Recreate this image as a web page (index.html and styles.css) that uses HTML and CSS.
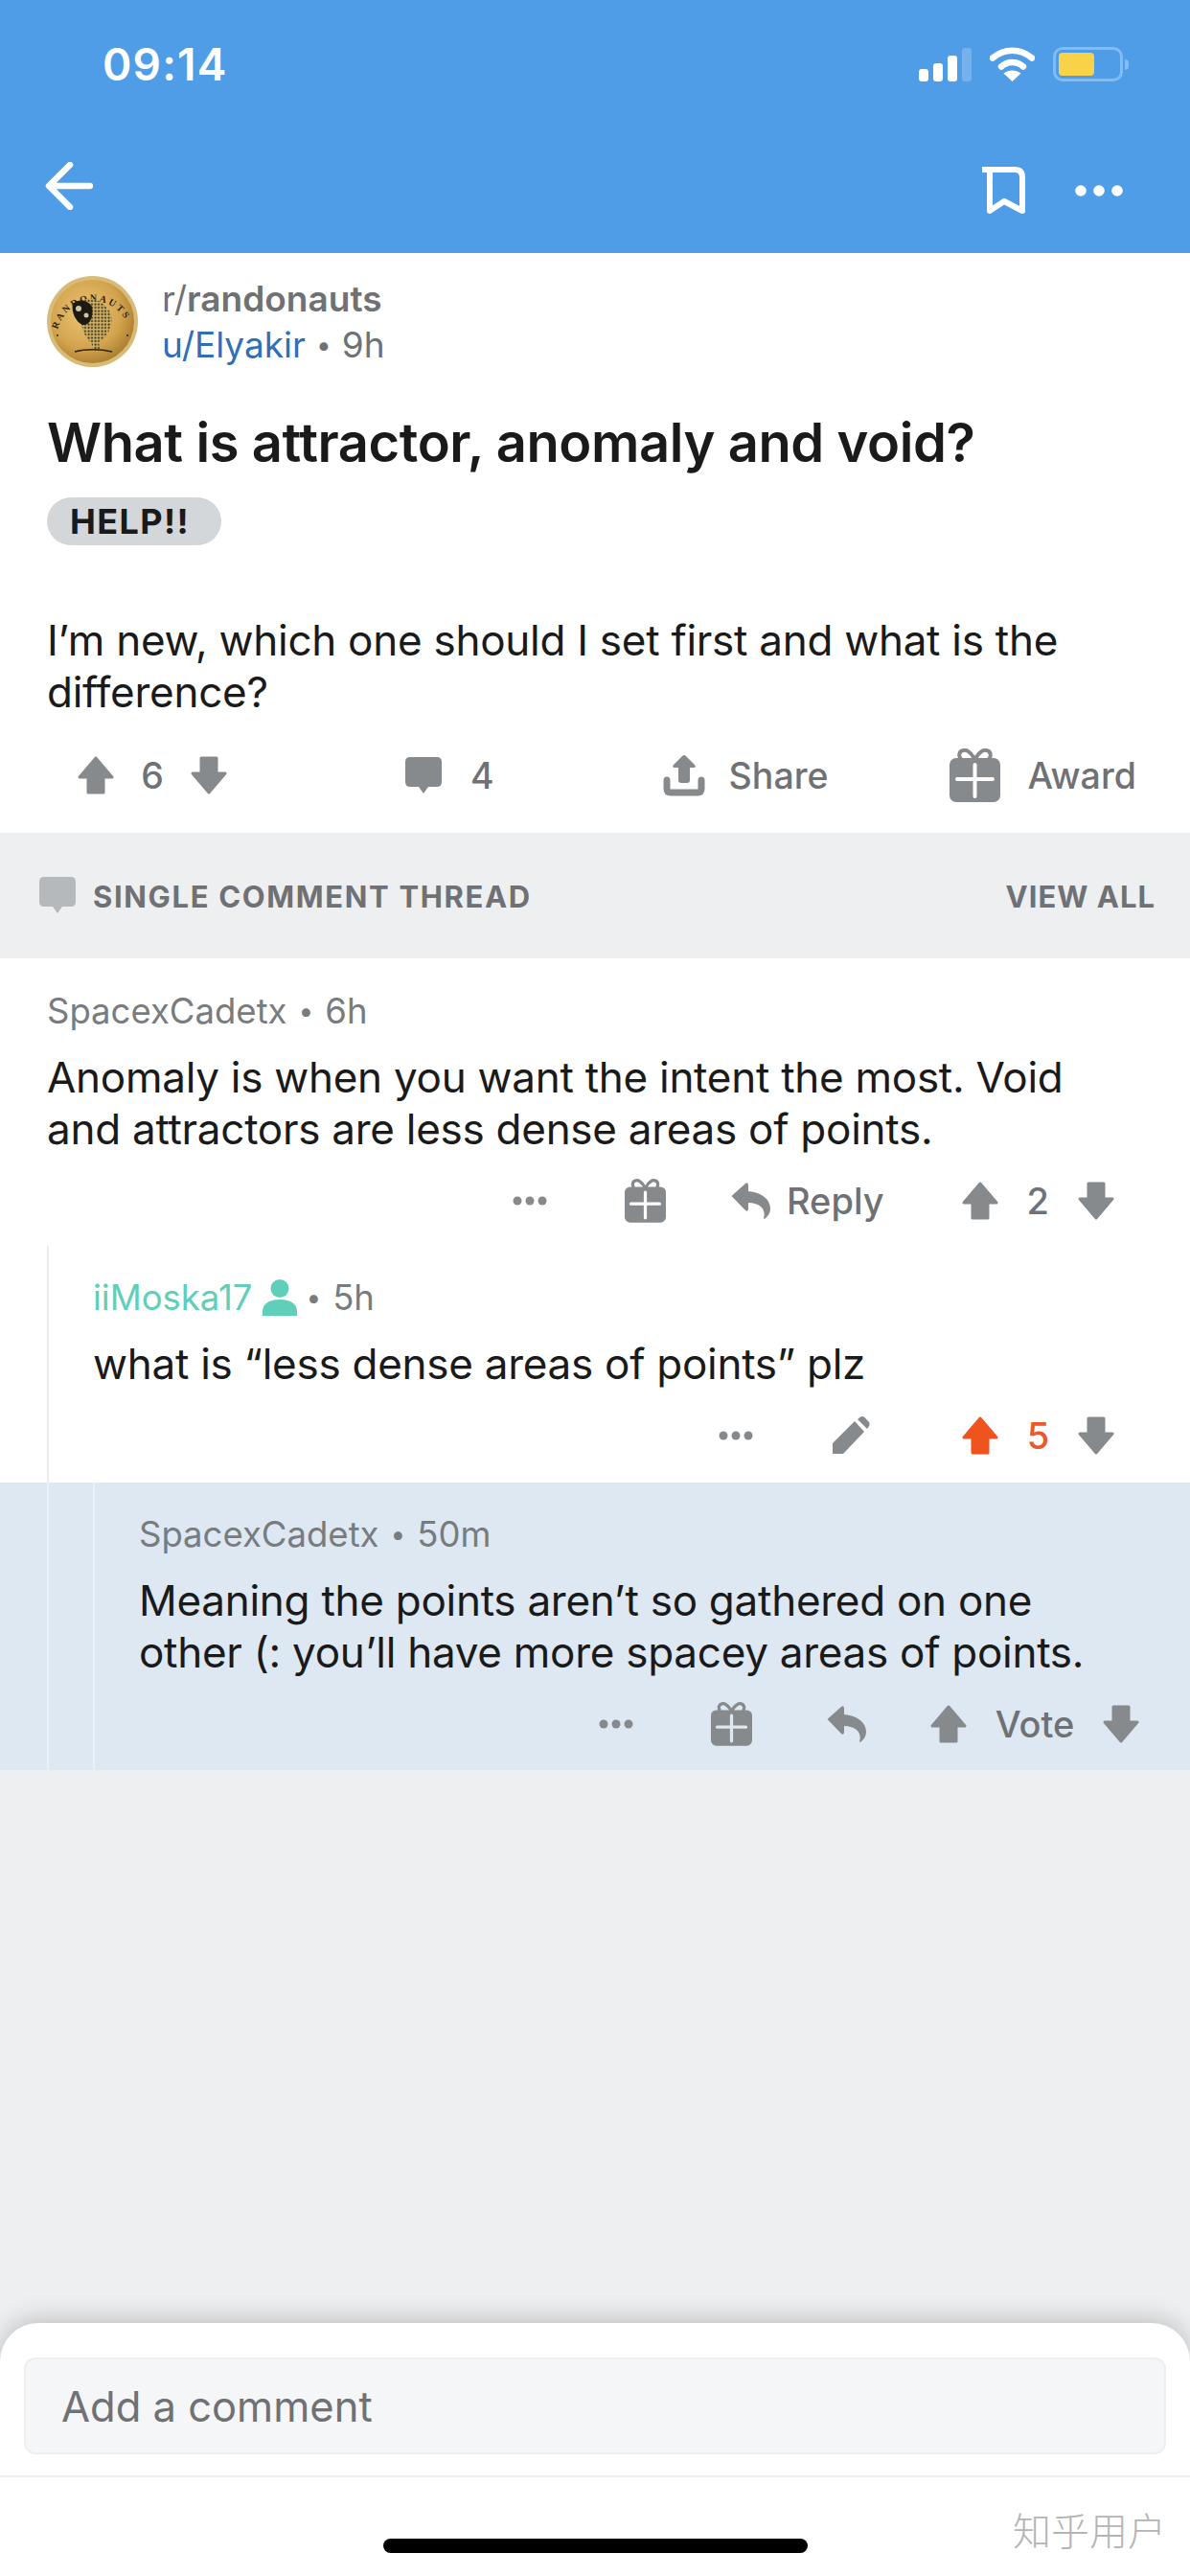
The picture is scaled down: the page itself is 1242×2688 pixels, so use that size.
FILE: index.html
```html
<!DOCTYPE html>
<html lang="en">
<head>
<meta charset="utf-8">
<title>What is attractor, anomaly and void?</title>
<link rel="stylesheet" href="styles.css">
</head>
<body>
<svg class="sprites" width="0" height="0" aria-hidden="true">
  <symbol id="i-up" viewBox="0 0 38 40"><path d="M19 2 L36 22 H27 V38 H11 V22 H2 Z" fill="currentColor" stroke="currentColor" stroke-width="3" stroke-linejoin="round"/></symbol>
  <symbol id="i-down" viewBox="0 0 38 40"><path d="M19 38 L36 18 H27 V2 H11 V18 H2 Z" fill="currentColor" stroke="currentColor" stroke-width="3" stroke-linejoin="round"/></symbol>
  <symbol id="i-bubble" viewBox="0 0 38 38"><path d="M5 0 H33 Q38 0 38 5 V26 Q38 31 33 31 H24 L19 38 L14 31 H5 Q0 31 0 26 V5 Q0 0 5 0 Z" fill="currentColor"/></symbol>
  <symbol id="i-share" viewBox="0 0 44 44"><path d="M22 1 Q23 1 24 2 L33 11 Q35 14 32 14 H28 V27 Q28 30 25 30 H19 Q16 30 16 27 V14 H12 Q9 14 11 11 L20 2 Q21 1 22 1 Z" fill="currentColor"/><path d="M4 27 V36 Q4 40 8 40 H36 Q40 40 40 36 V27" fill="none" stroke="currentColor" stroke-width="7" stroke-linecap="round"/></symbol>
  <symbol id="i-gift" viewBox="0 0 53 56"><path d="M26 11 C22 3 17 1 14 2 C10 3 9 8 12 11 M27 11 C31 3 36 1 39 2 C43 3 44 8 41 11" fill="none" stroke="currentColor" stroke-width="4"/><rect x="0" y="10" width="53" height="46" rx="7" fill="currentColor"/><path d="M8 32 H45 M26.500 17 V50" stroke="#fff" stroke-width="4" stroke-linecap="round"/></symbol>
  <symbol id="i-gift-blue" viewBox="0 0 53 56"><path d="M26 11 C22 3 17 1 14 2 C10 3 9 8 12 11 M27 11 C31 3 36 1 39 2 C43 3 44 8 41 11" fill="none" stroke="currentColor" stroke-width="4"/><rect x="0" y="10" width="53" height="46" rx="7" fill="currentColor"/><path d="M8 32 H45 M26.500 17 V50" stroke="#dde8f2" stroke-width="4" stroke-linecap="round"/></symbol>
  <symbol id="i-reply" viewBox="0 0 41 38"><path d="M0.500 14 L15 1 Q18 -1 18 3 V9 C32 10 41 18 41 27 C41 31 39 35 35 38 C34 38 34 37 34.500 35 C36 27 29 21 18 21 V27 Q18 31 15 29 Z" fill="currentColor"/></symbol>
  <symbol id="i-pencil" viewBox="0 0 40 40"><path d="M1 39 V28 L24 5 L34 16 L12 39 Z" fill="currentColor"/><path d="M27 3 L30 .5 Q32 -.5 34 .5 L39 6 Q40 8 39 10 L37 13 Z" fill="currentColor"/></symbol>
  <symbol id="i-dots" viewBox="0 0 36 10"><circle cx="5" cy="5" r="4.500" fill="currentColor"/><circle cx="18" cy="5" r="4.500" fill="currentColor"/><circle cx="31" cy="5" r="4.500" fill="currentColor"/></symbol>
</svg>

<div class="app">
  <header class="topbar">
    <div class="status">
      <span class="clock">09:14</span>
      <div class="status-icons">
        <div class="signal"><i class="bar b1"></i><i class="bar b2"></i><i class="bar b3"></i><i class="bar b4"></i></div>
        <svg class="wifi" viewBox="0 0 47 36"><path d="M3 11.500 C15 1 32 1 44 11.500" fill="none" stroke="#fff" stroke-width="6.500" stroke-linecap="round"/><path d="M12 20.500 C19 14.500 28 14.500 35 20.500" fill="none" stroke="#fff" stroke-width="6.500" stroke-linecap="round"/><path d="M23.500 36 L14.500 27.500 C20 23.500 27 23.500 32.500 27.500 Z" fill="#fff"/></svg>
        <div class="battery"><div class="battery-shell"><div class="battery-fill"></div></div><div class="battery-nub"></div></div>
      </div>
    </div>
    <nav class="navrow">
      <svg class="back" viewBox="0 0 50 50"><path d="M26 3 L4 25 L26 47 M5 25 H47" fill="none" stroke="#fff" stroke-width="6.500" stroke-linecap="round" stroke-linejoin="round"/></svg>
      <div class="nav-right">
        <svg class="bookmark" viewBox="0 0 45 49"><path d="M1 3 H34 Q42 3 42 11 V46 L23 36 L8 46 V3" fill="none" stroke="#fff" stroke-width="6" stroke-linejoin="round" stroke-linecap="round"/></svg>
        <svg class="more" viewBox="0 0 50 12"><circle cx="6" cy="6" r="5.800" fill="#fff"/><circle cx="25" cy="6" r="5.800" fill="#fff"/><circle cx="44" cy="6" r="5.800" fill="#fff"/></svg>
      </div>
    </nav>
  </header>

  <section class="post">
    <div class="post-head">
      <svg class="avatar" viewBox="0 0 95 95">
        <defs>
          <radialGradient id="gold" cx="42%" cy="40%" r="65%"><stop offset="0" stop-color="#ecc677"/><stop offset=".65" stop-color="#d3a44e"/><stop offset="1" stop-color="#a67a2e"/></radialGradient>
          <path id="ring" d="M11 58 A38 38 0 0 1 86 58"/>
          <pattern id="speck" width="3.500" height="3.500" patternUnits="userSpaceOnUse"><rect width="3.500" height="3.500" fill="#cdb066"/><circle cx="1.500" cy="1.500" r="1.100" fill="#3f3114"/></pattern>
        </defs>
        <circle cx="47.500" cy="47.500" r="47.500" fill="#d9bb78"/>
        <circle cx="47.500" cy="47.500" r="43.500" fill="url(#gold)"/>
        <text class="avatar-ring"><textPath href="#ring" startOffset="2%">RANDONAUTS</textPath></text>
        <path d="M36 26 C46 20 60 26 66 38 C71 50 63 64 54 69 L56 78 L49 78 L46 69 C38 64 33 48 36 26 Z" fill="url(#speck)"/>
        <path d="M27 29 C33 23 43 25 47 32 C49 42 45 52 37 51 C30 48 25 37 27 29 Z" fill="#1d1a12"/>
        <circle cx="33" cy="34" r="3" fill="#cfc7a4"/><circle cx="41" cy="41" r="2.500" fill="#cfc7a4"/>
        <path d="M29 79 C40 76 56 76 68 79" fill="none" stroke="#2e2410" stroke-width="1.500"/>
        <circle cx="11" cy="62" r="1" fill="#2e2410"/><circle cx="84" cy="62" r="1" fill="#2e2410"/>
      </svg>
      <div class="post-meta">
        <div class="sub">r/<b>randonauts</b></div>
        <div class="byline"><span class="author">u/Elyakir</span><span class="sep">•</span><span>9h</span></div>
      </div>
    </div>
    <h1 class="title">What is attractor, anomaly and void?</h1>
    <span class="flair">HELP!!</span>
    <p class="post-text">I’m new, which one should I set first and what is the difference?</p>
    <div class="post-actions">
      <div class="pa pa-vote"><svg class="ic arrow"><use href="#i-up"/></svg><span>6</span><svg class="ic arrow"><use href="#i-down"/></svg></div>
      <div class="pa pa-comments"><svg class="ic bubble"><use href="#i-bubble"/></svg><span>4</span></div>
      <div class="pa pa-share"><svg class="ic share"><use href="#i-share"/></svg><span>Share</span></div>
      <div class="pa pa-award"><svg class="ic gift-lg"><use href="#i-gift"/></svg><span>Award</span></div>
    </div>
  </section>

  <div class="threadbar">
    <svg class="thread-icon"><use href="#i-bubble"/></svg>
    <span class="thread-title">SINGLE COMMENT THREAD</span>
    <span class="thread-all">VIEW ALL</span>
  </div>

  <article class="comment c1">
    <div class="c-main">
      <div class="c-meta">SpacexCadetx<span class="sep">•</span>6h</div>
      <p class="c-text">Anomaly is when you want the intent the most. Void and attractors are less dense areas of points.</p>
      <div class="c-actions">
        <svg class="ic dots"><use href="#i-dots"/></svg>
        <svg class="ic gift act-gift"><use href="#i-gift"/></svg>
        <svg class="ic reply act-reply"><use href="#i-reply"/></svg>
        <span class="reply-label">Reply</span>
        <div class="votes act-votes"><svg class="ic arrow"><use href="#i-up"/></svg><span class="count">2</span><svg class="ic arrow"><use href="#i-down"/></svg></div>
      </div>
    </div>
  </article>

  <article class="comment c2">
    <div class="guide"></div>
    <div class="c-main">
      <div class="c-meta"><span class="op">iiMoska17</span><svg class="person" viewBox="0 0 36 38"><circle cx="18" cy="9.500" r="9.500" fill="#5fcfb9"/><path d="M0 38 V33 C0 25 8 21 18 21 C28 21 36 25 36 33 V38 Z" fill="#5fcfb9"/></svg><span class="sep">•</span>5h</div>
      <p class="c-text">what is “less dense areas of points” plz</p>
      <div class="c-actions">
        <svg class="ic dots"><use href="#i-dots"/></svg>
        <svg class="ic pencil act-pencil"><use href="#i-pencil"/></svg>
        <div class="votes act-votes2"><svg class="ic arrow up-on"><use href="#i-up"/></svg><span class="count count-on">5</span><svg class="ic arrow"><use href="#i-down"/></svg></div>
      </div>
    </div>
  </article>

  <article class="comment c3">
    <div class="guide"></div>
    <div class="guide"></div>
    <div class="c-main">
      <div class="c-meta">SpacexCadetx<span class="sep">•</span>50m</div>
      <p class="c-text">Meaning the points aren’t so gathered on one other (: you’ll have more spacey areas of points.</p>
      <div class="c-actions">
        <svg class="ic dots"><use href="#i-dots"/></svg>
        <svg class="ic gift act-gift"><use href="#i-gift-blue"/></svg>
        <svg class="ic reply act-reply3"><use href="#i-reply"/></svg>
        <div class="votes act-votes3"><svg class="ic arrow"><use href="#i-up"/></svg><span class="count vote-label">Vote</span><svg class="ic arrow"><use href="#i-down"/></svg></div>
      </div>
    </div>
  </article>

  <div class="filler"></div>

  <footer class="composer">
    <div class="composer-input">Add a comment</div>
    <div class="composer-rule"></div>
    <div class="home-row"><div class="home-bar"></div></div>
    <span class="watermark">知乎用户</span>
  </footer>
</div>
</body>
</html>
```

FILE: styles.css
```css
* { box-sizing: border-box; }
html, body { margin: 0; padding: 0; }
body { font-family: Inter, "Noto Sans", "Liberation Sans", sans-serif; background: #edeff1; color: #1a1a1b; }
.sprites { position: absolute; }
.app { width: 1242px; height: 2688px; display: flex; flex-direction: column; overflow: hidden; }

/* top bar */
.topbar { height: 264px; background: #4f9de6; flex: none; padding-top: 49px; }
.status { height: 36px; display: flex; align-items: center; justify-content: space-between; padding: 0 64px 0 107px; }
.clock { font-size: 46px; font-weight: 600; color: #fff; line-height: 36px; letter-spacing: 1.200px; }
.status-icons { display: flex; align-items: flex-end; height: 36px; }
.signal { display: flex; align-items: flex-end; gap: 5px; height: 36px; }
.bar { display: block; width: 10px; background: #fff; border-radius: 3px; }
.b1 { height: 13px; } .b2 { height: 19px; } .b3 { height: 27px; }
.b4 { height: 35px; background: rgba(255,255,255,.22); }
.wifi { width: 47px; height: 36px; margin-left: 19px; }
.battery { display: flex; align-items: center; margin-left: 19px; height: 36px; }
.battery-shell { width: 73px; height: 36px; border: 3px solid #82bcf1; border-radius: 10px; padding: 3px; }
.battery-fill { width: 37px; height: 24px; background: #f8d347; border-radius: 4px; }
.battery-nub { width: 4px; height: 11px; background: #82bcf1; border-radius: 0 4px 4px 0; margin-left: 2px; }
.navrow { display: flex; justify-content: space-between; align-items: flex-start; padding: 84px 70px 0 47px; }
.back { width: 50px; height: 50px; display: block; }
.nav-right { display: flex; align-items: center; padding-top: 5px; }
.bookmark { width: 45px; height: 49px; display: block; }
.more { width: 50px; height: 12px; margin-left: 52px; display: block; }

/* post */
.post { background: #fff; height: 605px; flex: none; padding: 24px 0 0 49px; display: flex; flex-direction: column; align-items: flex-start; }
.post-head { display: flex; align-items: center; height: 95px; }
.avatar { width: 95px; height: 95px; display: block; }
.avatar-ring { font: 700 10px "Liberation Serif", serif; letter-spacing: 2.200px; fill: #2c2310; }
.post-meta { margin-left: 25px; font-size: 37px; color: #6f7174; line-height: 48px; }
.sub b { font-weight: 600; }
.byline { display: flex; align-items: center; }
.author { color: #2f6fb8; }
.sep { margin: 0 11px; font-size: 28px; }
.title { margin: 45px 0 0; font-size: 56px; line-height: 68px; font-weight: 600; color: #1a1a1b; letter-spacing: -.4px; }
.flair { margin-top: 23px; height: 50px; width: 182px; border-radius: 25px; background: #d4d7da; font-size: 36px; font-weight: 700; line-height: 50px; padding-left: 24px; color: #1a1a1b; letter-spacing: 1.400px; }
.post-text { margin: 72px 0 0; width: 1100px; font-size: 44px; line-height: 54px; letter-spacing: -.27px; }
.post-actions { display: flex; align-items: center; height: 56px; margin-top: 32px; font-size: 37.500px; color: #6f7174; font-weight: 500; }
.pa { display: flex; align-items: center; }
.ic { display: block; color: #878a8c; flex: none; }
.arrow { width: 38px; height: 40px; }
.pa-vote { margin-left: 32px; width: 156px; justify-content: space-between; }
.pa-comments { margin-left: 186px; gap: 30px; }
.bubble { width: 38px; height: 38px; }
.pa-share { margin-left: 176px; gap: 25px; }
.share { width: 44px; height: 44px; }
.pa-award { margin-left: 126px; gap: 29px; }
.gift-lg { width: 53px; height: 56px; }

/* thread bar */
.threadbar { height: 131px; flex: none; display: flex; align-items: center; padding: 2px 36px 0 41px; font-size: 31px; font-weight: 700; color: #6f7174; }
.thread-icon { width: 38px; height: 38px; color: #b6b9bc; margin-right: 18px; margin-top: -4px; }
.thread-title { letter-spacing: 1.650px; }
.thread-all { margin-left: auto; letter-spacing: 1px; }

/* comments */
.comment { display: flex; padding-left: 49px; flex: none; }
.guide { width: 48px; border-left: 2px solid #e9ecef; flex: none; }
.c-main { flex: 1; min-width: 0; }
.c1 { background: #fff; height: 300px; padding-top: 33px; }
.c2 { background: #fff; height: 247px; }
.c2 .c-main { padding-top: 32px; }
.c3 { background: #dde8f2; height: 300px; }
.c3 .guide { border-left-color: #ebf1f6; }
.c3 .c-main { padding-top: 32px; }
.c-meta { display: flex; align-items: center; height: 44px; font-size: 36.500px; color: #787c7e; }
.c-meta .sep { margin: 0 12px; }
.c-text { margin: 20px 0 0; font-size: 44px; line-height: 54px; letter-spacing: -.27px; width: 1080px; }
.c3 .c-text { width: 1010px; }
.c-actions { display: flex; align-items: center; height: 46px; font-size: 38px; font-weight: 500; color: #6f7174; }
.c1 .c-actions { margin: 25px 0 0 486px; }
.c2 .c-actions { margin: 25px 0 0 653px; }
.c3 .c-actions { margin: 25px 0 0 480px; }
.dots { width: 36px; height: 10px; }
.gift { width: 43px; height: 46px; }
.reply { width: 41px; height: 38px; }
.pencil { width: 40px; height: 40px; }
.act-gift { margin-left: 81px; }
.act-reply { margin-left: 68px; }
.reply-label { margin-left: 17px; }
.act-votes { margin-left: 81px; }
.act-pencil { margin-left: 82px; }
.act-votes2 { margin-left: 96px; }
.act-reply3 { margin-left: 78px; }
.act-votes3 { margin-left: 67px; }
.votes { display: flex; align-items: center; }
.count { width: 83px; text-align: center; flex: none; }
.vote-label { width: 142px; }
.count-on { color: #ea5a2b; }
.up-on { color: #f0541e; }
.op { color: #5fcfb9; }
.person { width: 36px; height: 38px; margin-left: 11px; flex: none; }
.c2 .sep { margin-left: 9px; }

.filler { flex: 1; }

/* composer */
.composer { position: relative; height: 264px; flex: none; background: #fff; border-radius: 40px 40px 0 0; box-shadow: 0 -4px 26px rgba(0,0,0,.2); padding: 36px 25px 0; }
.composer-input { height: 101px; background: #f5f6f8; border: 2px solid #eceef0; border-radius: 12px; padding-left: 37px; font-size: 43.500px; line-height: 99px; color: #6f7174; }
.composer-rule { height: 2px; background: #eceef0; margin: 22px -25px 0; }
.home-row { display: flex; justify-content: center; margin-top: 64px; }
.home-bar { width: 443px; height: 15px; background: #000; border-radius: 8px; }
.watermark { position: absolute; left: 1057px; top: 186px; font: 300 40px "Noto Sans CJK SC", sans-serif; color: #b4b4b4; }
```
